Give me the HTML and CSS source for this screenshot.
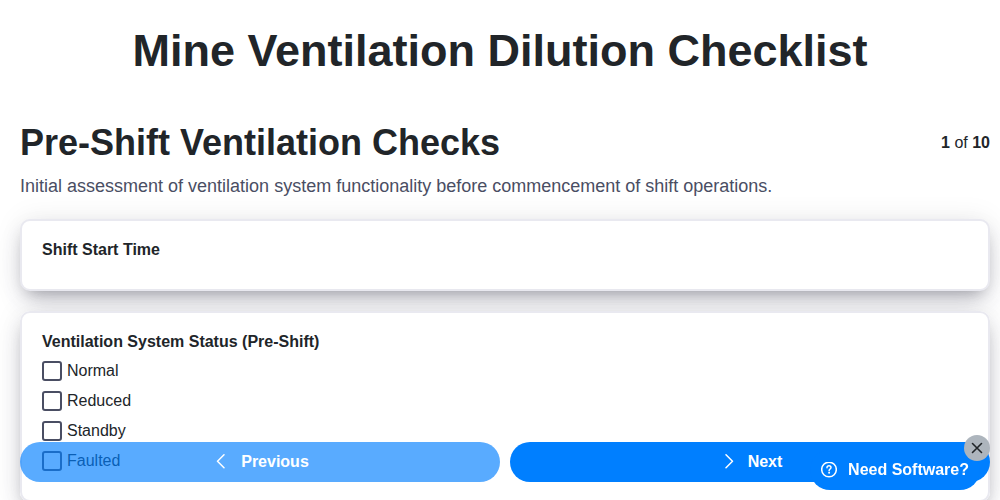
FILE: index.html
```html
<!DOCTYPE html>
<html lang="en">
<head>
<meta charset="utf-8">
<title>Mine Ventilation Dilution Checklist</title>
<link rel="stylesheet" href="styles.css">
</head>
<body>

<h1 class="title">Mine Ventilation Dilution Checklist</h1>

<form class="checklist">
	<div class="page-header">
		<h2>Pre-Shift Ventilation Checks</h2>
		<div class="page-count"><b>1</b> of <b>10</b></div>
	</div>
	<p class="description">Initial assessment of ventilation system functionality before commencement of shift operations.</p>

	<div class="card">
		<div class="label">Shift Start Time</div>
	</div>

	<fieldset class="card options">
		<legend class="label">Ventilation System Status (Pre-Shift)</legend>
		<label class="option"><input type="checkbox" name="status" value="normal">Normal</label>
		<label class="option"><input type="checkbox" name="status" value="reduced">Reduced</label>
		<label class="option"><input type="checkbox" name="status" value="standby">Standby</label>
		<label class="option"><input type="checkbox" name="status" value="faulted">Faulted</label>
	</fieldset>
</form>

<div class="navigation">
	<button type="button" class="nav-button previous">
		<svg width="16" height="16" viewBox="0 0 16 16" fill="none" stroke="currentColor" stroke-width="1.5" stroke-linecap="round" stroke-linejoin="round"><path d="M11 .8 4.500 7.300 11 13.800"/></svg>
		Previous
	</button>
	<button type="button" class="nav-button next">
		<svg width="16" height="16" viewBox="0 0 16 16" fill="none" stroke="currentColor" stroke-width="1.5" stroke-linecap="round" stroke-linejoin="round"><path d="M6 .8 12.500 7.300 6 13.800"/></svg>
		Next
	</button>
</div>

<div class="software">
	<a class="software-link" href="#">
		<svg width="16" height="16" viewBox="0 0 16 16" fill="none" stroke="currentColor" stroke-linecap="round"><circle cx="8" cy="7.5" r="7.3" stroke-width="1.5"/><path d="M6 5.700C6 4.400 6.800 3.800 8 3.800s2 .7 2 1.800C10 7 8.100 7.100 8.100 8.700" stroke-width="1.500"/><circle cx="8.100" cy="10.800" r="1" fill="currentColor" stroke="none"/></svg>
		Need Software?
	</a>
	<button type="button" class="close" aria-label="Close">
		<svg width="12" height="12" viewBox="0 0 12 12" fill="none" stroke="currentColor" stroke-width="1.6" stroke-linecap="round"><path d="M1.500 1.500 10.500 10.500M10.500 1.500 1.500 10.500"/></svg>
	</button>
</div>

</body>
</html>
```

FILE: styles.css
```css
* {
	box-sizing: border-box;
}

body {
	margin: 0;
	padding: 21px 10px 80px 20px;
	background: white;
	color: #212529;
	font-family: "Liberation Sans", Arial, sans-serif;
	font-size: 16px;
	line-height: 20px;
	overflow-x: hidden;
}

/* hide the bar, the page still scrolls */
html {
	scrollbar-width: none;
}

h1, h2, p {
	margin: 0;
}

.title {
	margin-right: 10px;
	font-size: 45px;
	line-height: 60px;
	text-align: center;
}

.checklist {
	margin-top: 40px;
}

.page-header {
	display: flex;
	justify-content: space-between;
	align-items: center;
}

.page-header h2 {
	font-size: 36px;
	line-height: 44px;
}

.description {
	margin: 11px 0 23px;
	color: #4a4e63;
	font-size: 18px;
}

.card {
	min-height: 72px;
	margin: 0 0 20px;
	padding: 19px 20px;
	background: white;
	border: 2px solid #e9e9f0;
	border-radius: 10px;
	box-shadow: 0 13px 27px -5px rgba(50, 50, 93, .22), 0 8px 16px -8px rgba(0, 0, 0, .3), 0 0 28px rgba(0, 0, 0, .08);
}

.label {
	padding: 0;
	font-weight: bold;
}

.options .label {
	float: left;
	width: 100%;
	margin-bottom: 9px;
}

.option {
	display: flex;
	align-items: center;
	gap: 5px;
	clear: both;
	margin-bottom: 10px;
}

.option input {
	appearance: none;
	width: 20px;
	height: 20px;
	margin: 0;
	background: white;
	border: 2px solid #4a4e63;
	border-radius: 3px;
}

.option input:checked {
	background: #007fff;
}

.navigation {
	display: flex;
	gap: 10px;
	position: fixed;
	left: 20px;
	right: 10px;
	bottom: 18px;
}

.nav-button {
	display: flex;
	flex: 1;
	justify-content: center;
	align-items: center;
	gap: 12px;
	height: 40px;
	padding: 0 0 0 2px;
	background: #007fff;
	color: white;
	border: 0;
	border-radius: 20px;
	font: bold 16px "Liberation Sans", Arial, sans-serif;
	cursor: pointer;
}

.previous {
	opacity: .65;
}

.software {
	position: fixed;
	right: 20px;
	bottom: 10px;
}

.software-link {
	display: flex;
	align-items: center;
	gap: 11px;
	height: 40px;
	padding: 0 11px;
	background: #007fff;
	border-radius: 20px;
	color: white;
	font-weight: bold;
	text-decoration: none;
}

.close {
	display: flex;
	justify-content: center;
	align-items: center;
	position: absolute;
	top: -15px;
	right: -10px;
	width: 26px;
	height: 26px;
	padding: 0;
	background: #adb5bd;
	color: #212529;
	border: 0;
	border-radius: 50%;
	cursor: pointer;
}
```
